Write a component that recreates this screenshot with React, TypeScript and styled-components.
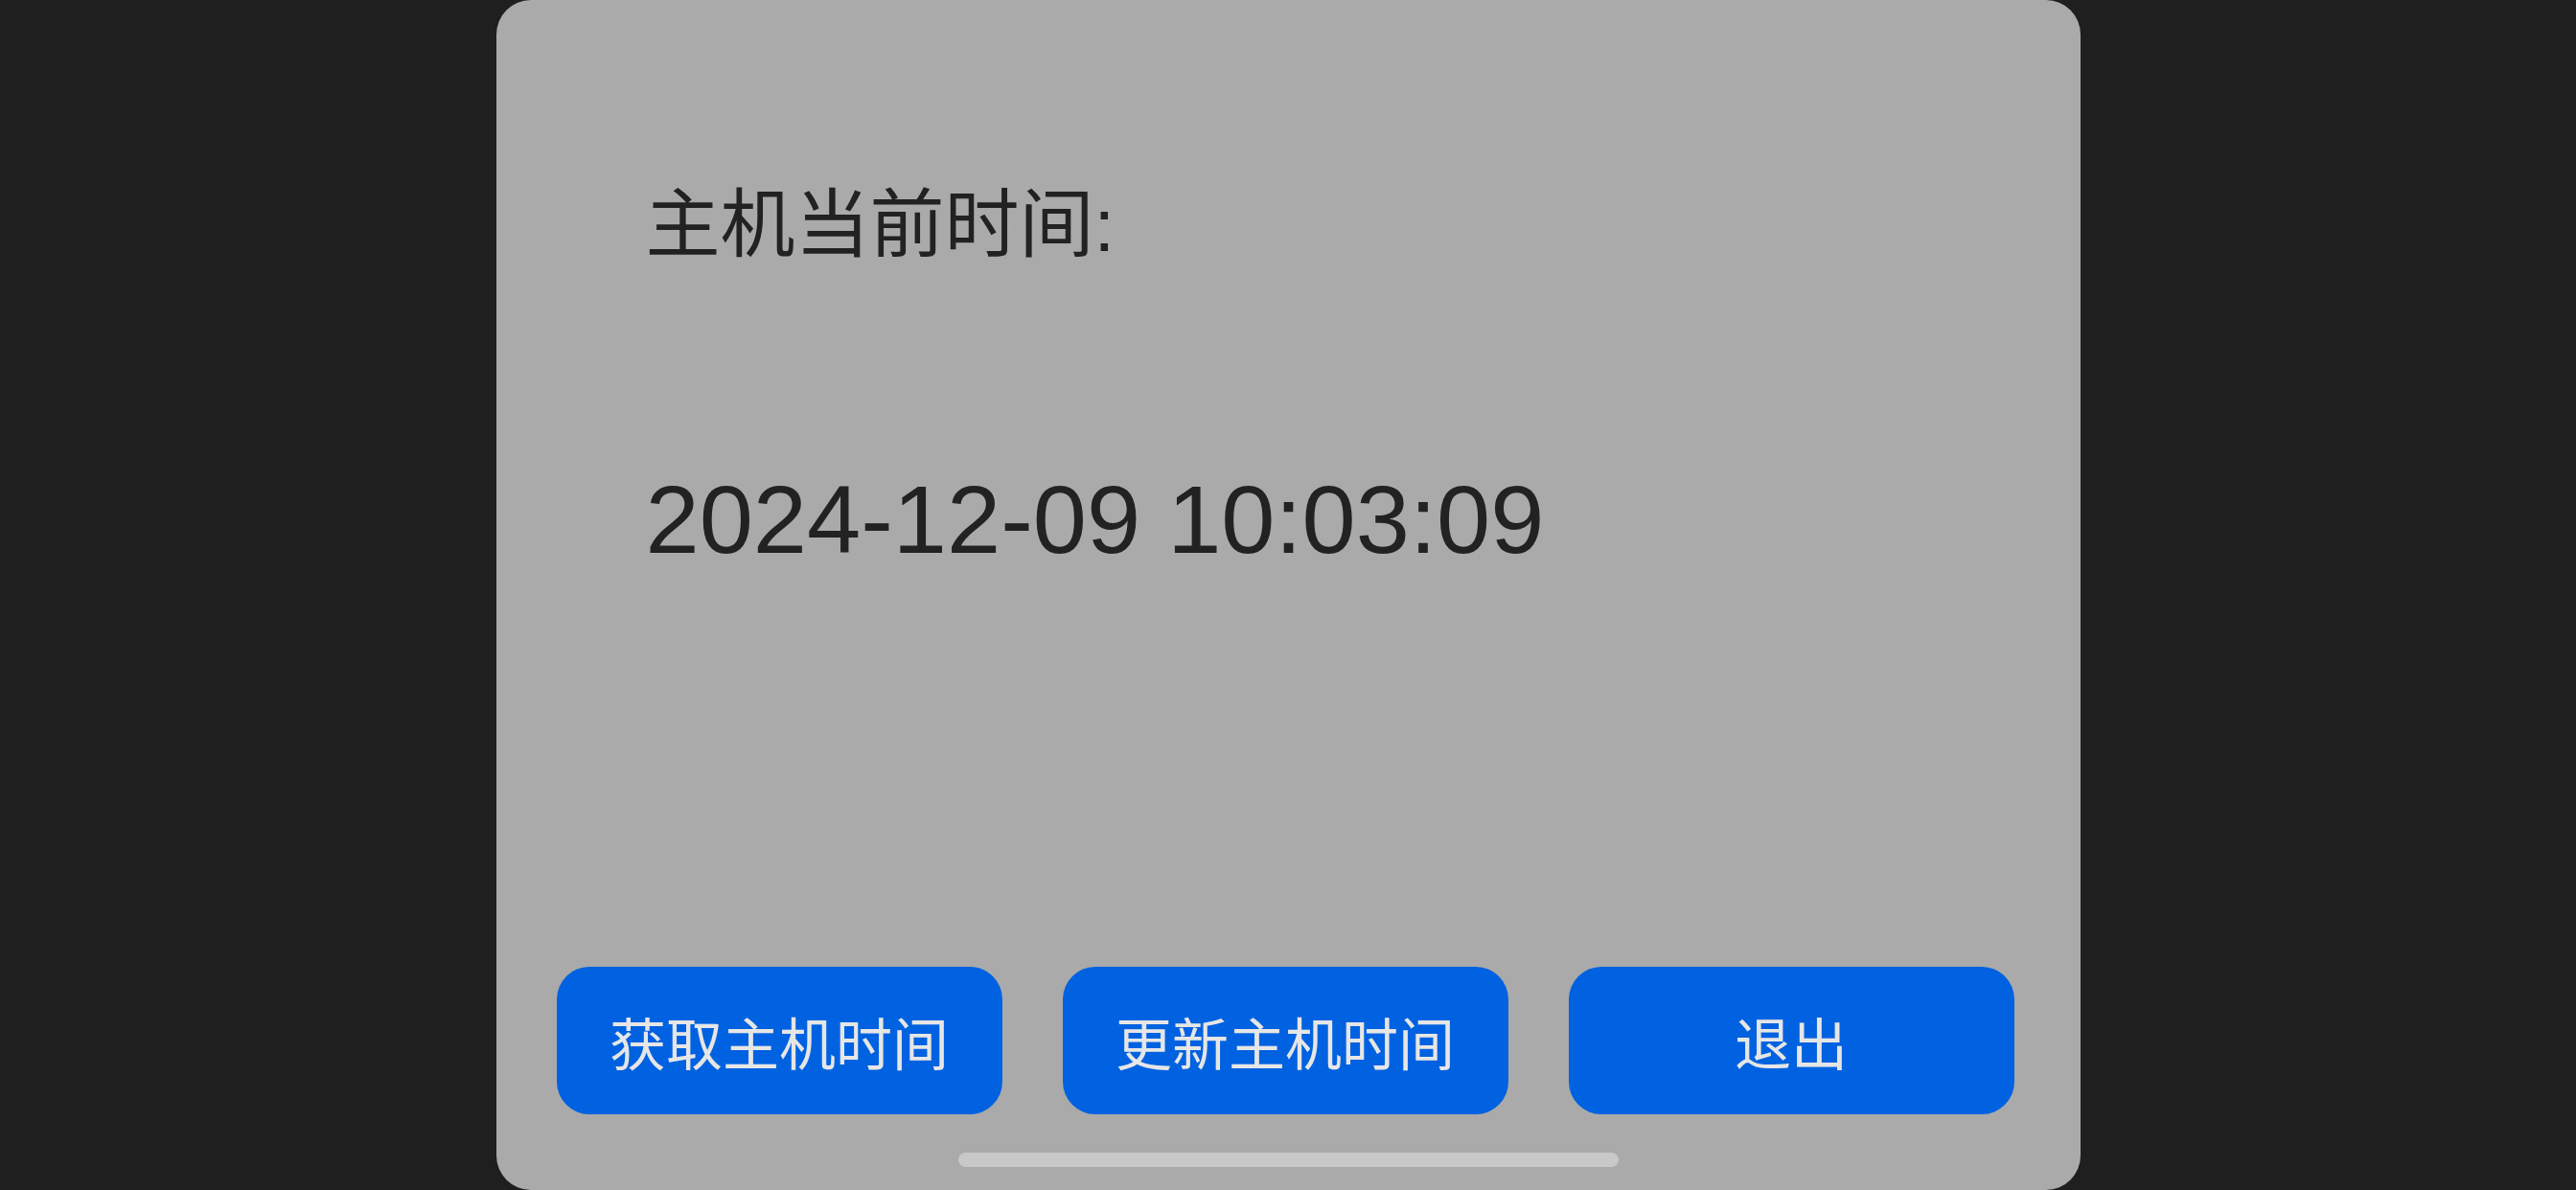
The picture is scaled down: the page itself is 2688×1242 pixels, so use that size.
import React from "react";
import styled, { createGlobalStyle } from "styled-components";

const GlobalStyle = createGlobalStyle`
  html, body {
    margin: 0;
    padding: 0;
    background: #1f1f1f;
    overflow: hidden;
  }
  * {
    box-sizing: border-box;
  }
`;

const Screen = styled.div`
  width: 2688px;
  height: 1242px;
  display: flex;
  justify-content: center;
  background: #1f1f1f;
  font-family: "Liberation Sans", "Noto Sans CJK SC", sans-serif;
`;

const Sheet = styled.div`
  width: 1653px;
  height: 1242px;
  display: flex;
  flex-direction: column;
  background: #aaaaaa;
  border-radius: 36px;
`;

const Info = styled.div`
  display: flex;
  flex-direction: column;
  padding: 196px 0 0 156px;
  flex: 1;
`;

const Label = styled.div`
  font-size: 78px;
  line-height: 1;
  color: #222222;
`;

const TimeValue = styled.div`
  margin-top: 218px;
  font-size: 101px;
  line-height: 1;
  color: #222222;
`;

const ButtonRow = styled.div`
  display: grid;
  grid-template-columns: repeat(3, 465px);
  gap: 63px;
  padding: 0 69px 0 63px;
`;

const ActionButton = styled.button`
  height: 154px;
  border: none;
  border-radius: 34px;
  background: #0062e0;
  color: #e6e6e6;
  font-family: "Noto Sans CJK SC", sans-serif;
  font-size: 59px;
  line-height: 1;
  padding: 0;
  cursor: pointer;
`;

const HomeArea = styled.div`
  display: flex;
  justify-content: center;
  padding: 40px 0 24px;
`;

const HomeIndicator = styled.div`
  width: 689px;
  height: 15px;
  border-radius: 8px;
  background: #c8c8c8;
`;

const actions = ["获取主机时间", "更新主机时间", "退出"];

export default function App() {
  return (
    <>
      <GlobalStyle />
      <Screen>
        <Sheet>
          <Info>
            <Label>主机当前时间:</Label>
            <TimeValue>2024-12-09 10:03:09</TimeValue>
          </Info>
          <ButtonRow>
            {actions.map((a) => (
              <ActionButton key={a}>{a}</ActionButton>
            ))}
          </ButtonRow>
          <HomeArea>
            <HomeIndicator />
          </HomeArea>
        </Sheet>
      </Screen>
    </>
  );
}
